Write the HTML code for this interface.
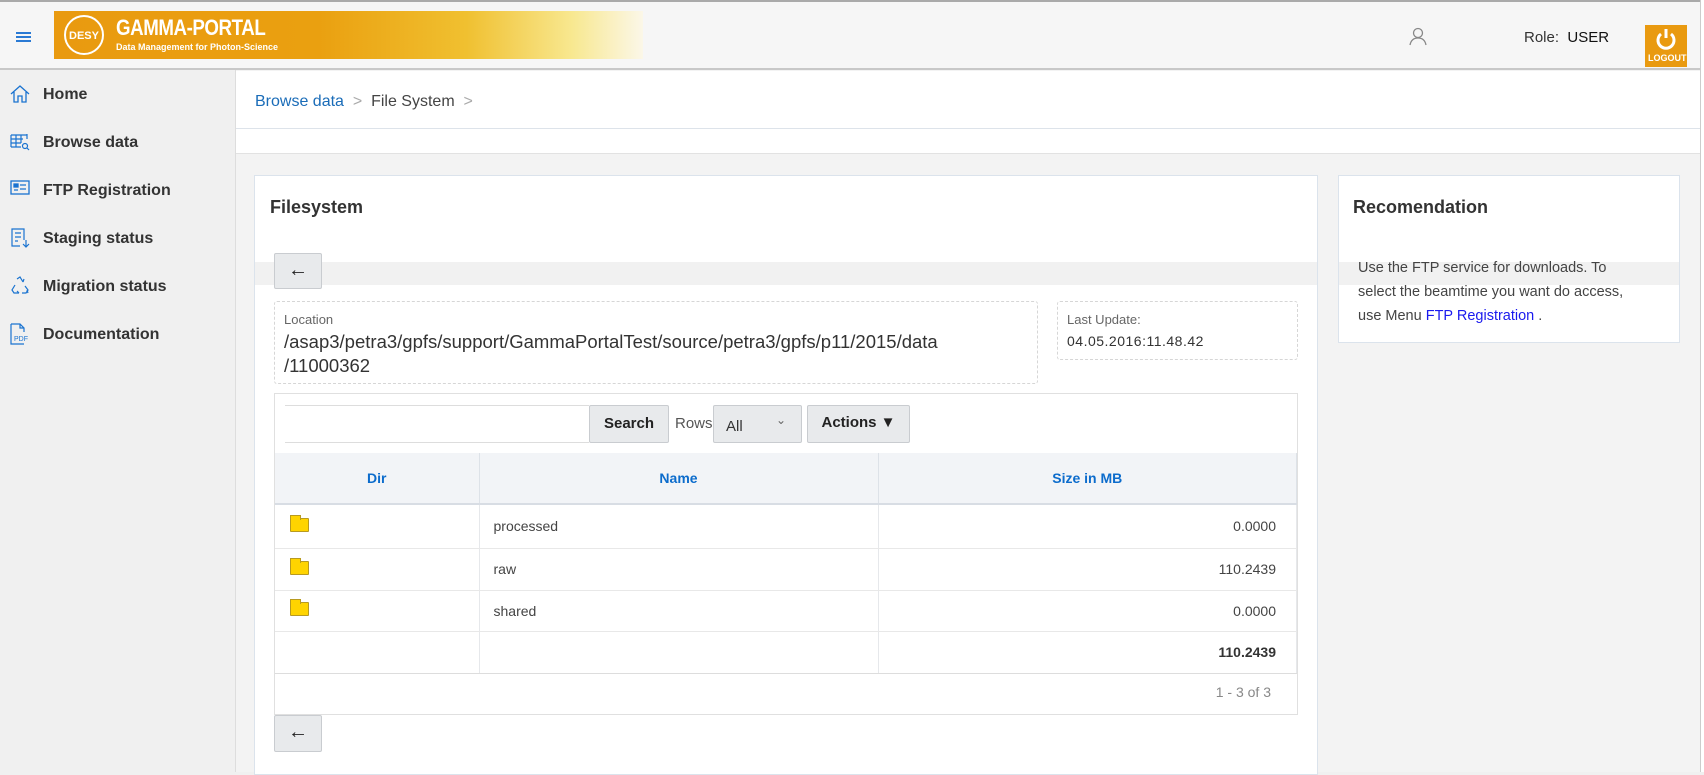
<!DOCTYPE html>
<html><head><meta charset="utf-8"><style>
*{box-sizing:border-box;margin:0;padding:0}
body{width:1704px;height:772px;overflow:hidden;background:#f0f0f0;font-family:"Liberation Sans",sans-serif;position:relative;color:#333}
.abs{position:absolute}
.hdr{left:0;top:0;width:1704px;height:70px;background:#f6f6f6;border-top:2px solid #aaa;border-bottom:2px solid #c8c8c8}
.side{left:0;top:70px;width:236px;height:702px;background:#f0f0f0;border-right:1px solid #ddd}
.mi{position:absolute;left:43px;font-size:16px;font-weight:bold;color:#333}
.ic{position:absolute;left:10px}
.main{left:236px;top:70px;width:1464px;height:702px;background:#f3f3f3}
.box{background:#fff;border:1px solid #dbe3ec}
.btn{background:#e8eaec;border:1px solid #c9ccd0;border-radius:2px}
.dash{border:1px dashed #d6d6d6;border-radius:3px;background:#fff}
table{border-collapse:collapse;font-size:14px}
td,th{border-right:1px solid #e6e8eb;border-bottom:1px solid #e8e8e8}
th{color:#0c6ccc;font-size:14px;background:#f2f4f7;border-bottom:2px solid #d8dde4;border-right:1px solid #dde2e8}
.folder{display:inline-block;width:19px;height:14px;background:#ffd400;border:1px solid #b89a20;border-radius:1px;position:relative}
.folder:before{content:"";position:absolute;left:-1px;top:-4px;width:9px;height:4px;background:#ffd400;border:1px solid #b89a20;border-bottom:none}
</style></head><body>
<div class="abs hdr">
 <div class="abs" style="left:16px;top:30px;width:15px;height:2px;background:#2a7ad4;box-shadow:0 4px 0 #2a7ad4,0 8px 0 #2a7ad4"></div>
 <div class="abs" style="left:54px;top:9px;width:589px;height:48px;background:linear-gradient(90deg,#e99a10 0%,#eaa010 45%,#f0c030 70%,#f8e890 88%,#fbf7e8 100%)">
  <div class="abs" style="left:10px;top:4px;width:40px;height:40px;border:2px solid #fff;border-radius:50%;color:#fff;font-size:11px;font-weight:bold;text-align:center;line-height:38px">DESY</div>
  <div class="abs" style="left:62px;top:4px;color:#fff;font-weight:bold;font-size:22px;letter-spacing:-0.5px;transform:scaleX(.85);transform-origin:left">GAMMA-PORTAL</div>
  <div class="abs" style="left:62px;top:31px;color:#fff;font-weight:bold;font-size:9px">Data Management for Photon-Science</div>
 </div>
 <svg class="abs" style="left:1408px;top:24px" width="20" height="20" viewBox="0 0 20 20" fill="none" stroke="#888" stroke-width="1.3"><circle cx="10" cy="7" r="4.5"/><path d="M2 19c1-5 4-7 8-7s7 2 8 7"/></svg>
 <div class="abs" style="left:1524px;top:27px;font-size:15px;color:#333">Role:&nbsp; <span style="color:#111">USER</span></div>
 <div class="abs" style="left:1645px;top:23px;width:42px;height:42px;background:#e99a10">
  <svg class="abs" style="left:10px;top:3px" width="22" height="22" viewBox="0 0 22 22" fill="none" stroke="#fff" stroke-width="3"><path d="M6 6a8 8 0 1 0 10 0"/><path d="M11 1v9"/></svg>
  <div class="abs" style="left:3px;top:28px;color:#fff;font-size:9px;font-weight:bold">LOGOUT</div>
 </div>
</div>
<div class="abs side">
 <svg class="ic" style="top:15px" width="20" height="18" viewBox="0 0 20 18" fill="none" stroke="#1a73d0" stroke-width="1.3"><path d="M1 9L10 1l9 8M4 7v10h4v-6h4v6h4V7"/></svg>
 <div class="mi" style="top:16px">Home</div>
 <svg class="ic" style="top:63px" width="20" height="18" viewBox="0 0 20 18" fill="none" stroke="#1a73d0" stroke-width="1.2"><path d="M1 2h16M1 6h12M1 10h10M1 14h10M1 2v12M6 2v12M11 2v8M17 1v5"/><circle cx="15" cy="13" r="2.5"/><path d="M17 15l2 2"/></svg>
 <div class="mi" style="top:64px">Browse data</div>
 <svg class="ic" style="top:110px" width="20" height="16" viewBox="0 0 20 16" fill="none" stroke="#1a73d0" stroke-width="1.3"><rect x="1" y="1" width="18" height="13"/><rect x="4" y="4" width="4" height="3" fill="#1a73d0"/><path d="M4 10h4M10 5h6M10 9h6"/></svg>
 <div class="mi" style="top:112px">FTP Registration</div>
 <svg class="ic" style="top:158px" width="20" height="20" viewBox="0 0 20 20" fill="none" stroke="#1a73d0" stroke-width="1.2"><path d="M14 12V1H2v17h8M5 5h6M5 9h6M5 13h3M16 12v7M13 16l3 3 3-3"/></svg>
 <div class="mi" style="top:160px">Staging status</div>
 <svg class="ic" style="top:206px" width="20" height="20" viewBox="0 0 20 20" fill="none" stroke="#1a73d0" stroke-width="1.2"><path d="M7 3l3-2 3 5M13 6l1-3M5 9l-3 5 2 3h5M9 17l-2-2M15 10l3 4-2 3h-4M17 14l1 3"/></svg>
 <div class="mi" style="top:208px">Migration status</div>
 <svg class="ic" style="top:253px" width="20" height="22" viewBox="0 0 20 22" fill="none" stroke="#1a73d0" stroke-width="1.2"><path d="M1 1h9l4 4v4M1 1v20h13M10 1v4h4"/><text x="4" y="18" font-size="7" fill="#1a73d0" stroke="none" font-family="Liberation Sans">PDF</text></svg>
 <div class="mi" style="top:256px">Documentation</div>
</div>
<div class="abs main">
 <div class="abs" style="left:0;top:1px;width:1464px;height:58px;background:#fff;border-bottom:1px solid #dde3ea"></div>
 <div class="abs" style="left:19px;top:23px;font-size:16px"><span style="color:#1a6cb8">Browse data</span> <span style="color:#aaa">&nbsp;&gt;&nbsp;</span> <span style="color:#444">File System</span> <span style="color:#aaa">&nbsp;&gt;</span></div>
 <div class="abs" style="left:0;top:59px;width:1464px;height:25px;background:#fff;border-bottom:1px solid #e2e2e2"></div>
 <div class="abs box" style="left:18px;top:105px;width:1064px;height:600px"></div>
 <div class="abs" style="left:34px;top:127px;font-size:18px;font-weight:bold;color:#333">Filesystem</div>
 <div class="abs" style="left:19px;top:192px;width:1062px;height:23px;background:#f1f1f1"></div>
 <div class="abs btn" style="left:38px;top:183px;width:48px;height:36px;text-align:center;font-size:20px;line-height:32px;color:#222">&#8592;</div>
 <div class="abs dash" style="left:38px;top:231px;width:764px;height:83px">
  <div class="abs" style="left:9px;top:10px;font-size:13px;color:#666">Location</div>
  <div class="abs" style="left:9px;top:28px;font-size:18.5px;color:#333;line-height:24px">/asap3/petra3/gpfs/support/GammaPortalTest/source/petra3/gpfs/p11/2015/data<br>/11000362</div>
 </div>
 <div class="abs dash" style="left:821px;top:231px;width:241px;height:59px">
  <div class="abs" style="left:9px;top:10px;font-size:13px;color:#666">Last Update:</div>
  <div class="abs" style="left:9px;top:31px;font-size:14px;color:#333;letter-spacing:.5px">04.05.2016:11.48.42</div>
 </div>
 <div class="abs" style="left:38px;top:323px;width:1024px;height:322px;border:1px solid #e0e0e0;background:#fff">
  <div class="abs" style="left:10px;top:11px;width:304px;height:38px;border:1px solid #ddd;border-left:none;border-right:none"></div>
  <div class="abs btn" style="left:314px;top:11px;width:80px;height:38px;font-weight:bold;font-size:15px;text-align:center;line-height:36px;color:#222">Search</div>
  <div class="abs" style="left:400px;top:21px;font-size:15px;color:#555">Rows</div>
  <div class="abs btn" style="left:438px;top:11px;width:89px;height:38px;font-size:15px;color:#333"><span class="abs" style="left:12px;top:12px">All</span><span class="abs" style="left:62px;top:7px;font-size:12px;color:#666">&#8964;</span></div>
  <div class="abs btn" style="left:532px;top:11px;width:103px;height:38px;font-weight:bold;font-size:15px;text-align:center;line-height:34px;color:#222">Actions &#9660;</div>
  <table class="abs" style="left:0;top:59px;width:1022px">
   <tr style="height:51px"><th style="width:204px">Dir</th><th style="width:399px">Name</th><th>Size in MB</th></tr>
   <tr style="height:44px"><td style="padding-left:15px"><span class="folder"></span></td><td style="padding-left:14px;color:#444">processed</td><td style="text-align:right;padding-right:20px;color:#444">0.0000</td></tr>
   <tr style="height:42px"><td style="padding-left:15px"><span class="folder"></span></td><td style="padding-left:14px;color:#444">raw</td><td style="text-align:right;padding-right:20px;color:#444">110.2439</td></tr>
   <tr style="height:41px"><td style="padding-left:15px"><span class="folder"></span></td><td style="padding-left:14px;color:#444">shared</td><td style="text-align:right;padding-right:20px;color:#444">0.0000</td></tr>
   <tr style="height:42px"><td style="border-bottom:1px solid #ddd"></td><td style="border-bottom:1px solid #ddd"></td><td style="text-align:right;padding-right:20px;font-weight:bold;border-bottom:1px solid #ddd">110.2439</td></tr>
  </table>
  <div class="abs" style="right:26px;top:290px;font-size:14px;color:#888">1 - 3 of 3</div>
 </div>
 <div class="abs btn" style="left:38px;top:645px;width:48px;height:37px;text-align:center;font-size:20px;line-height:33px;color:#222">&#8592;</div>
 <div class="abs box" style="left:1102px;top:105px;width:342px;height:168px"></div>
 <div class="abs" style="left:1103px;top:192px;width:340px;height:23px;background:#f1f1f1"></div>
 <div class="abs" style="left:1117px;top:127px;font-size:18px;font-weight:bold;color:#333">Recomendation</div>
 <div class="abs" style="left:1122px;top:186px;font-size:14.5px;line-height:24px;color:#444;width:285px">Use the FTP service for downloads. To select the beamtime you want do access, use Menu <span style="color:#1a1aee">FTP Registration</span> .</div>
</div>
<div class="abs" style="left:1700px;top:0;width:4px;height:772px;background:#fff;border-left:1px solid #ccc"></div>
</body></html>
